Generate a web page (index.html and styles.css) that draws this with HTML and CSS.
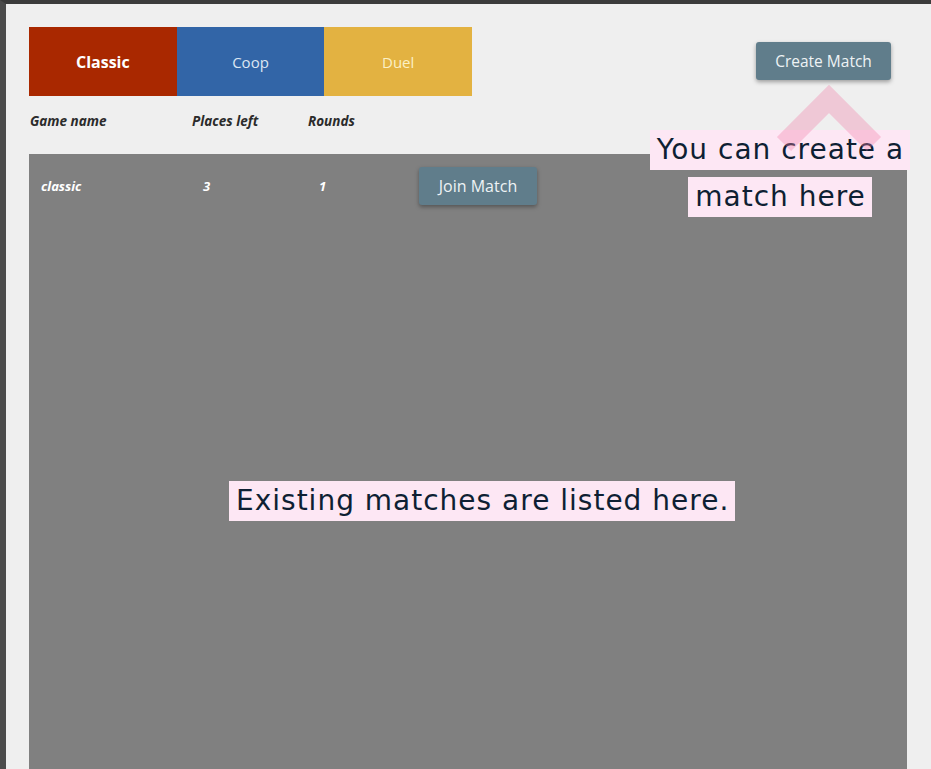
FILE: index.html
```html
<!DOCTYPE html>
<html lang="en">
<head>
<meta charset="utf-8">
<title>Matches</title>
<link rel="stylesheet" href="styles.css">
</head>
<body>
<div class="frame">
  <div class="top">
    <div class="tabs">
      <div class="tab tab-classic">Classic</div>
      <div class="tab tab-coop">Coop</div>
      <div class="tab tab-duel">Duel</div>
    </div>
    <button class="btn btn-create">Create Match</button>
  </div>
  <div class="cols head">
    <span>Game name</span>
    <span>Places left</span>
    <span>Rounds</span>
  </div>
  <div class="panel">
    <div class="cols row">
      <span>classic</span>
      <span>3</span>
      <span>1</span>
      <button class="btn btn-join">Join Match</button>
    </div>
    <div class="hint hint-list"><span>Existing matches are listed here.</span></div>
  </div>
  <div class="hint hint-create"><span>You can create a</span><span>match here</span></div>
  <svg class="chevron" width="120" height="70" viewBox="0 0 120 70">
    <polyline points="15,60 60,15 105,60" fill="none" stroke="rgba(240,130,170,0.35)" stroke-width="20"/>
  </svg>
</div>
</body>
</html>
```
FILE: styles.css
```css
html, body {
  margin: 0;
  padding: 0;
  height: 100%;
  overflow: hidden;
}
body {
  background: #efefef;
  font-family: "Open Sans", "Noto Sans", sans-serif;
}
.frame {
  position: relative;
  box-sizing: border-box;
  height: 100vh;
  border-top: 4px solid #3b3b3b;
  border-left: 6px solid #4b4b4b;
  padding: 23px 24px 0 23px;
  display: flex;
  flex-direction: column;
}
.top {
  display: flex;
  align-items: flex-start;
}
.tabs {
  display: flex;
  width: 443px;
  height: 69px;
}
.tab {
  flex: 1;
  display: flex;
  align-items: center;
  justify-content: center;
  font-size: 15px;
}
.tab-classic { background: #a92800; color: #ffffff; font-weight: 700; font-size: 16px; }
.tab-coop { background: #3265a7; color: #dce6f3; }
.tab-duel { background: #e3b241; color: #fbf0c4; }
.btn {
  border: 0;
  border-radius: 3px;
  background: #607d8b;
  color: #eef3f5;
  font-family: "Open Sans", "Noto Sans", sans-serif;
  font-size: 15.5px;
  height: 38px;
  padding: 0;
  box-shadow: 0 2px 4px rgba(0, 0, 0, 0.35);
}
.btn-create {
  margin-left: auto;
  margin-right: 16px;
  margin-top: 15px;
  width: 135px;
}
.cols {
  display: grid;
  grid-template-columns: 162px 116px 100px auto;
  align-items: center;
  font-style: italic;
  font-weight: 700;
  font-size: 13.5px;
}
.head {
  color: #2b2b2b;
  height: 18px;
  margin-top: 16px;
  margin-bottom: 24px;
  padding-left: 1px;
}
.panel {
  position: relative;
  flex: 1;
  background: #808080;
}
.row {
  color: #ffffff;
  padding: 13px 0 0 12px;
  font-size: 13px;
}
.row .btn-join {
  width: 118px;
  justify-self: start;
  font-style: normal;
  font-weight: 400;
  font-size: 16px;
}
.hint {
  position: absolute;
  display: flex;
  flex-direction: column;
  align-items: center;
  gap: 7px;
  font-family: "DejaVu Sans", sans-serif;
  font-size: 28px;
  letter-spacing: 1px;
  color: #0e1f33;
}
.hint span {
  background: #fde7f4;
  line-height: 40px;
  height: 40px;
  padding: 0 6px 0 7px;
  white-space: nowrap;
}
.hint-list {
  left: 200px;
  top: 327px;
}
.hint-create {
  left: 614px;
  top: 126px;
  width: 320px;
}
.chevron {
  position: absolute;
  left: 763px;
  top: 80px;
}
```
